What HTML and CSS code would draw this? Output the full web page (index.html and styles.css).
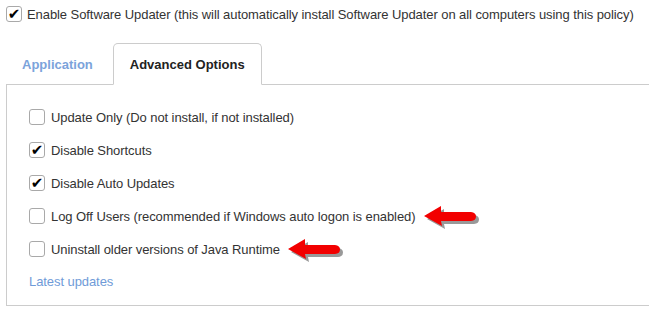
FILE: index.html
```html
<!DOCTYPE html>
<html lang="en">
<head>
    <meta charset="UTF-8">
    <title>Software Updater</title>
    <link rel="stylesheet" href="styles.css">
</head>
<body>
    <label class="enable-row">
        <span class="cb checked">&#10004;</span>
        Enable Software Updater (this will automatically install Software Updater on all computers using this policy)
    </label>

    <div class="tabs">
        <div class="tab">Application</div>
        <div class="tab active">Advanced Options</div>
    </div>

    <div class="panel">
        <label class="option"><span class="cb"></span>Update Only (Do not install, if not installed)</label>
        <label class="option"><span class="cb checked">&#10004;</span>Disable Shortcuts</label>
        <label class="option"><span class="cb checked">&#10004;</span>Disable Auto Updates</label>
        <label class="option">
            <span class="cb"></span>Log Off Users (recommended if Windows auto logon is enabled)
            <svg class="arrow" width="58" height="24" viewBox="0 0 58 24">
                <path class="arrow-shadow" d="M3 13 L20 3 L20 9 L50 9 Q55 9.5 55 13.5 Q55 17.5 50 18 L20 18 L21 23 Z"/>
                <path class="arrow-body" d="M0 10 L17 0 L17 6 L47 6 Q52 6.5 52 10.5 Q52 14.5 47 15 L17 15 L18 20 Z"/>
            </svg>
        </label>
        <label class="option">
            <span class="cb"></span>Uninstall older versions of Java Runtime
            <svg class="arrow" width="58" height="24" viewBox="0 0 58 24">
                <path class="arrow-shadow" d="M3 13 L20 3 L20 9 L50 9 Q55 9.5 55 13.5 Q55 17.5 50 18 L20 18 L21 23 Z"/>
                <path class="arrow-body" d="M0 10 L17 0 L17 6 L47 6 Q52 6.5 52 10.5 Q52 14.5 47 15 L17 15 L18 20 Z"/>
            </svg>
        </label>
        <a href="#" class="latest">Latest updates</a>
    </div>
</body>
</html>
```

FILE: styles.css
```css
body {
    font-family: "Liberation Sans", Arial, sans-serif;
    font-size: 13px;
    letter-spacing: -0.075px;
    color: #333;
    margin: 0;
    padding: 0;
    background-color: white;
    overflow: hidden;
}
.cb {
    display: inline-flex;
    align-items: center;
    justify-content: center;
    width: 14px;
    height: 14px;
    border: 1px solid #a9a9a9;
    border-radius: 3px;
    background-color: white;
    color: #000;
    font-family: "DejaVu Sans", sans-serif;
    font-size: 15px;
    line-height: 1;
    margin-right: 5px;
    flex-shrink: 0;
}
.enable-row {
    display: flex;
    align-items: center;
    padding: 6px 6px 0 6px;
    height: 16px;
}
.tabs {
    display: flex;
    margin: 21px 0 0 6px;
    border-bottom: 1px solid #ccc;
    height: 41px;
    letter-spacing: 0;
}
.tab {
    font-weight: bold;
    padding: 0 15px 0 16px;
    display: flex;
    align-items: center;
    color: #7ba3db;
    margin-bottom: -1px;
}
.tab.active {
    color: #222;
    background-color: white;
    border: 1px solid #ccc;
    border-bottom-color: white;
    border-radius: 5px 5px 0 0;
    padding: 0 16px;
    margin-left: 5px;
}
.panel {
    margin-left: 6px;
    border-left: 1px solid #ccc;
    border-bottom: 1px solid #ccc;
    padding: 24px 22px 12px 22px;
    height: 184px;
    position: relative;
}
.option {
    display: flex;
    align-items: center;
    height: 16px;
    margin-bottom: 17px;
    position: relative;
}
.option .cb {
    margin-right: 6px;
}
.arrow {
    margin-left: 8px;
    margin-top: 4px;
}
.arrow-shadow {
    fill: rgba(0, 0, 0, 0.4);
}
.arrow-body {
    fill: #f20000;
}
.latest {
    display: inline-block;
    color: #6f9bd8;
    text-decoration: none;
}
```
